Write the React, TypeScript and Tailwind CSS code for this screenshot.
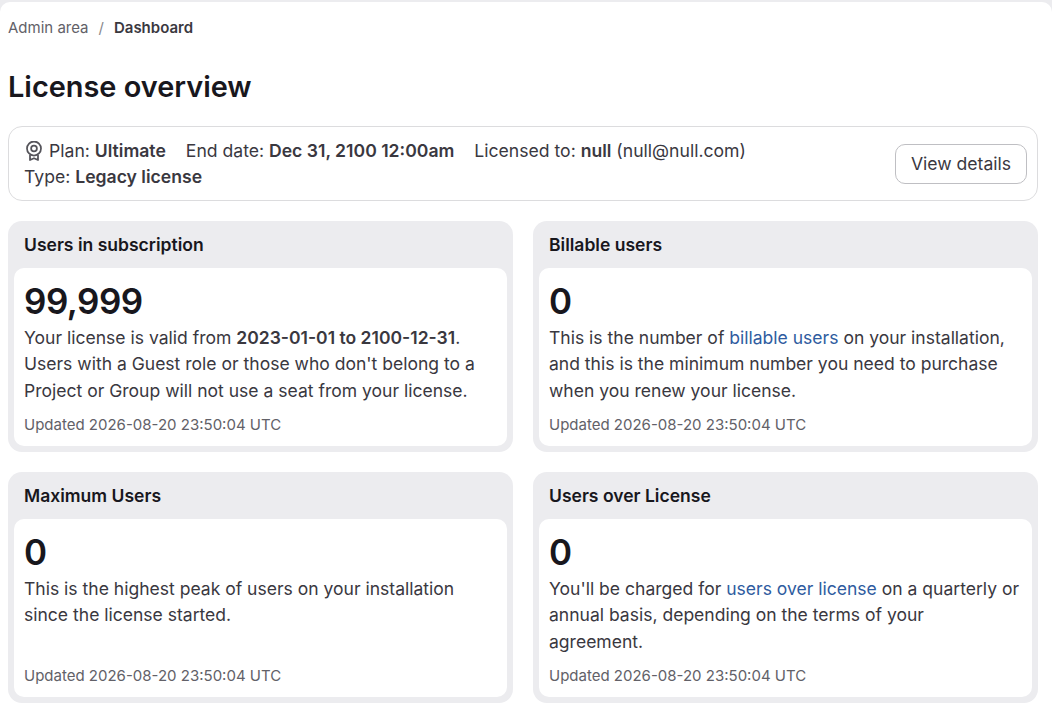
const FONT = { fontFamily: "Inter, 'Liberation Sans', sans-serif" };

function AwardIcon() {
  return (
    <svg width="20" height="20" viewBox="0 0 16 16" fill="none" stroke="#55545a" strokeWidth="1.4" className="shrink-0">
      <circle cx="8" cy="6" r="5.6" />
      <circle cx="8" cy="6" r="2.3" />
      <path d="M4.8 11 L4.8 15.2 L8 13.8 L11.2 15.2 L11.2 11" strokeLinejoin="round" />
    </svg>
  );
}

function StatCard({ title, value, children }: { title: string; value: string; children: React.ReactNode }) {
  return (
    <div className="rounded-[14px] bg-[#ececef] px-[6px] pb-[6px]">
      <h2 className="px-[10px] pt-[11px] pb-[11px] text-[17.55px] leading-[25px] font-semibold text-[#18171d]">{title}</h2>
      <div className="flex h-[178px] flex-col rounded-[10px] bg-white px-[10px] pt-[11px]">
        <div className="text-[35px] leading-[44px] font-semibold tracking-[-0.5px] text-[#18171d]">{value}</div>
        <p className="mt-[2px] h-[80px] text-[17.55px] leading-[26.4px] text-[#3a383f]">{children}</p>
        <p className="mt-[10px] text-[15px] leading-[20px] text-[#626168]">Updated 2026-08-20 23:50:04 UTC</p>
      </div>
    </div>
  );
}

export default function App() {
  return (
    <div style={FONT} className="min-h-[718px] overflow-hidden bg-[#ececef] pt-[2px]">
      <div className="min-h-[716px] rounded-t-[10px] bg-white pr-[14px] pb-[15px] pl-[8px]">
        <nav className="flex h-[51px] items-center pt-[1px] text-[15px]">
          <span className="text-[#626168]">Admin area</span>
          <span className="mx-[10px] text-[#89888d]">/</span>
          <span className="font-semibold text-[#3a383f]">Dashboard</span>
        </nav>
        <h1 className="mt-[15px] text-[28.9px] leading-[38px] font-semibold text-[#18171d]">License overview</h1>
        <div className="mt-[20px] flex h-[75px] items-center justify-between rounded-[14px] border border-[#dcdcde] pr-[10px] pl-[15px]">
          <div className="pt-[1px] text-[17.6px] leading-[26.4px] text-[#3a383f]">
            <div className="flex items-center">
              <AwardIcon />
              <span className="ml-[5px]">Plan: <strong className="font-semibold">Ultimate</strong></span>
              <span className="ml-[20px]">End date: <strong className="font-semibold">Dec 31, 2100 12:00am</strong></span>
              <span className="ml-[20px]">Licensed to: <strong className="font-semibold">null</strong> (null@null.com)</span>
            </div>
            <div>Type: <strong className="font-semibold">Legacy license</strong></div>
          </div>
          <button className="h-[40px] w-[132px] rounded-[10px] border border-[#bfbfc3] bg-white pt-[1px] text-[17.6px] text-[#3a383f]">View details</button>
        </div>
        <div className="mt-[20px] grid grid-cols-2 gap-[20px]">
          <StatCard title="Users in subscription" value="99,999">
            Your license is valid from <strong className="font-semibold">2023-01-01 to 2100-12-31</strong>. Users with a Guest role or those who don't belong to a Project or Group will not use a seat from your license.
          </StatCard>
          <StatCard title="Billable users" value="0">
            This is the number of <a className="text-[#2f5ca0]">billable users</a> on your installation, and this is the minimum number you need to purchase when you renew your license.
          </StatCard>
          <StatCard title="Maximum Users" value="0">
            This is the highest peak of users on your installation since the license started.
          </StatCard>
          <StatCard title="Users over License" value="0">
            You'll be charged for <a className="text-[#2f5ca0]">users over license</a> on a quarterly or annual basis, depending on the terms of your agreement.
          </StatCard>
        </div>
      </div>
    </div>
  );
}
